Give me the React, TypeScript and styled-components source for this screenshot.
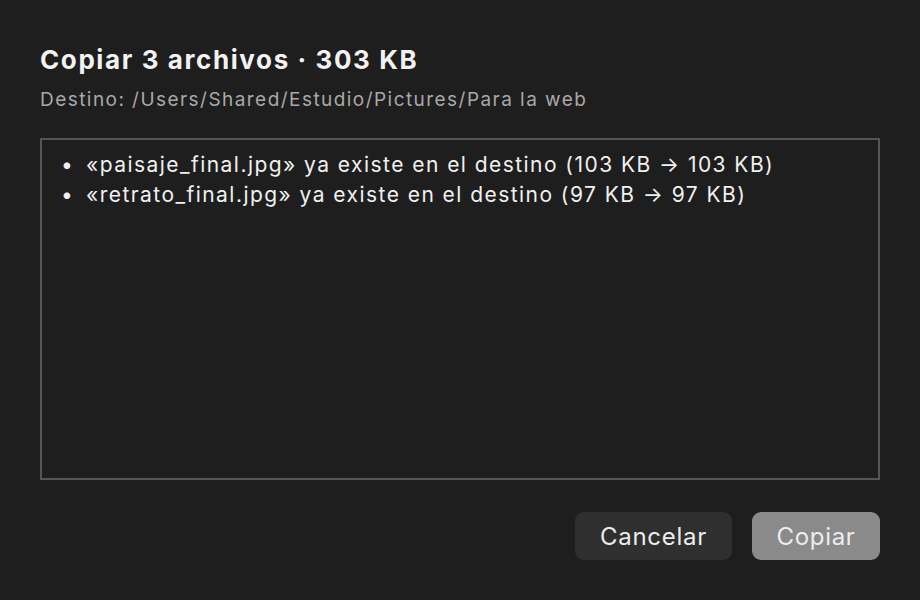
import React from "react";
import styled, { createGlobalStyle } from "styled-components";

const Global = createGlobalStyle`
  html, body { margin: 0; padding: 0; background: #1e1e1e; }
  body { font-family: Inter, "Noto Sans", "Liberation Sans", sans-serif; -webkit-font-smoothing: antialiased; }
`;

const Dialog = styled.div`
  width: 920px;
  height: 600px;
  box-sizing: border-box;
  padding: 42px 40px 0 40px;
  background: #1e1e1e;
  display: flex;
  flex-direction: column;
`;

const Title = styled.h1`
  margin: 0;
  font-size: 26px;
  line-height: 36px;
  font-weight: 700;
  color: #f2f2f2;
  letter-spacing: 1.6px;
`;

const Subtitle = styled.div`
  margin-top: 10px;
  font-size: 19px;
  line-height: 24px;
  color: #a8a8a8;
  letter-spacing: 1.45px;
`;

const ListBox = styled.ul`
  margin: 26px 0 0 0;
  height: 342px;
  box-sizing: border-box;
  border: 2px solid #555555;
  padding: 10px 0 0 19px;
  list-style: none;
  display: flex;
  flex-direction: column;
`;

const Item = styled.li`
  font-size: 21px;
  line-height: 30px;
  color: #f0f0f0;
  letter-spacing: 1.45px;
  display: flex;
  align-items: baseline;
`;

const Bullet = styled.span`
  width: 25px;
  flex: none;
  font-size: 21px;
  letter-spacing: 0;
`;

const Actions = styled.div`
  margin-top: 32px;
  display: flex;
  justify-content: flex-end;
  gap: 20px;
`;

const Button = styled.button<{ $primary?: boolean }>`
  height: 48px;
  padding: 0 20px;
  border: none;
  border-radius: 9px;
  font-family: inherit;
  font-size: 24px;
  letter-spacing: 0.7px;
  color: #ececec;
  background: ${(p) => (p.$primary ? "#8a8a8a" : "#2f2f2f")};
  min-width: ${(p) => (p.$primary ? "128px" : "157px")};
`;

const items = [
  "«paisaje_final.jpg» ya existe en el destino (103 KB → 103 KB)",
  "«retrato_final.jpg» ya existe en el destino (97 KB → 97 KB)",
];

export default function App() {
  return (
    <>
      <Global />
      <Dialog>
        <Title>Copiar 3 archivos · 303 KB</Title>
        <Subtitle>Destino: /Users/Shared/Estudio/Pictures/Para la web</Subtitle>
        <ListBox>
          {items.map((t) => (
            <Item key={t}>
              <Bullet>•</Bullet>
              {t}
            </Item>
          ))}
        </ListBox>
        <Actions>
          <Button>Cancelar</Button>
          <Button $primary>Copiar</Button>
        </Actions>
      </Dialog>
    </>
  );
}
